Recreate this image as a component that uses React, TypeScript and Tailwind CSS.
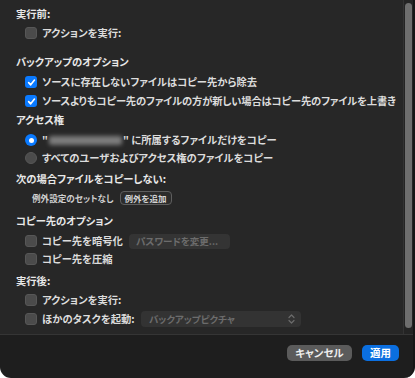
import React from 'react';

const font = { fontFamily: '"Noto Sans CJK JP", "Noto Sans", sans-serif' };

function Check({ checked = false }: { checked?: boolean }) {
  if (checked) {
    return (
      <div className="w-[12px] h-[12px] rounded-[3px] bg-[#0a7aff] flex items-center justify-center shrink-0">
        <svg width="9" height="9" viewBox="0 0 10 10" fill="none">
          <path d="M1.8 5.2 L4.1 7.6 L8.3 2.3" stroke="white" strokeWidth="1.8" strokeLinecap="round" strokeLinejoin="round" />
        </svg>
      </div>
    );
  }
  return <div className="w-[12px] h-[12px] rounded-[3px] bg-[#4b4b4b] border border-[#575757] shrink-0" />;
}

function Radio({ selected = false }: { selected?: boolean }) {
  if (selected) {
    return (
      <div className="w-[12px] h-[12px] rounded-full bg-[#0a7aff] flex items-center justify-center shrink-0">
        <div className="w-[5px] h-[5px] rounded-full bg-white" />
      </div>
    );
  }
  return <div className="w-[12px] h-[12px] rounded-full bg-[#4b4b4b] border border-[#575757] shrink-0" />;
}

function Heading({ children, className = '' }: { children: React.ReactNode; className?: string }) {
  return (
    <div className={`h-[18px] flex items-center pl-[16px] text-[10.3px] font-bold text-[#e8e8e8] ${className}`}>
      {children}
    </div>
  );
}

function Row({ children, className = '' }: { children: React.ReactNode; className?: string }) {
  return (
    <div className={`h-[18px] flex items-center pl-[25px] gap-[5px] text-[10.3px] font-bold text-[#dcdcdc] ${className}`}>
      {children}
    </div>
  );
}

export default function App() {
  return (
    <div className="w-[415px] h-[378px] bg-white" style={{ ...font, fontFeatureSettings: '"palt"' }}>
      <div className="w-full h-full bg-[#1e1e1e] rounded-b-[11px] overflow-hidden flex flex-col border-r-[2px] border-[#161616]">
        {/* scrolling content */}
        <div className="h-[335px] flex bg-[#272727] border-b border-[#353535]">
          <div className="flex-1 flex flex-col pt-[5px] whitespace-nowrap">
            <Heading>実行前:</Heading>
            <Row className="mt-[1px]">
              <Check />
              <span>アクションを実行:</span>
            </Row>

            <Heading className="mt-[11px]">バックアップのオプション</Heading>
            <Row className="mt-[2px]">
              <Check checked />
              <span>ソースに存在しないファイルはコピー先から除去</span>
            </Row>
            <Row className="mt-[1px]">
              <Check checked />
              <span className="tracking-[-0.16px]">ソースよりもコピー先のファイルの方が新しい場合はコピー先のファイルを上書き</span>
            </Row>

            <Heading className="mt-[1px]">アクセス権</Heading>
            <Row className="mt-[2px]">
              <Radio selected />
              <span className="flex items-center">
                "
                <span className="inline-block w-[73px] h-[9px] mx-[1px] rounded-[2px] bg-[#7c7c7c] blur-[2px]" />
                " に所属するファイルだけをコピー
              </span>
            </Row>
            <Row>
              <Radio />
              <span>すべてのユーザおよびアクセス権のファイルをコピー</span>
            </Row>

            <Heading className="mt-[3px]">次の場合ファイルをコピーしない:</Heading>
            <div className="h-[18px] mt-[1px] flex items-center pl-[32px] text-[8.6px] font-bold text-[#cfcfcf]">
              <span>例外設定のセットなし</span>
              <div className="ml-[6px] h-[14px] w-[52px] flex items-center justify-center rounded-[4px] border border-[#5e5e5e] bg-[#2c2c2c] text-[8.5px] text-[#d6d6d6]">
                例外を追加
              </div>
            </div>

            <Heading className="mt-[5px]">コピー先のオプション</Heading>
            <Row className="mt-[2px]">
              <Check />
              <span className="w-[82px]">コピー先を暗号化</span>
              <div className="h-[15px] w-[101px] px-[7px] flex items-center rounded-[4px] bg-[#343434] text-[9.5px] text-[#6c6c6c]">
                パスワードを変更...
              </div>
            </Row>
            <Row>
              <Check />
              <span>コピー先を圧縮</span>
            </Row>

            <Heading className="mt-[4px]">実行後:</Heading>
            <Row className="mt-[1px]">
              <Check />
              <span>アクションを実行:</span>
            </Row>
            <Row className="mt-[1px]">
              <Check />
              <span className="w-[94px]">ほかのタスクを起動:</span>
              <div className="h-[16px] w-[160px] pl-[8px] pr-[6px] flex items-center justify-between rounded-[4px] bg-[#333333] text-[9.5px] text-[#6c6c6c]">
                <span>バックアップピクチャ</span>
                <svg width="7" height="10" viewBox="0 0 7 10" fill="none">
                  <path d="M1 3.5 L3.5 1 L6 3.5 M1 6.5 L3.5 9 L6 6.5" stroke="#6c6c6c" strokeWidth="1.2" strokeLinecap="round" strokeLinejoin="round" />
                </svg>
              </div>
            </Row>
          </div>

          {/* scrollbar */}
          <div className="w-[10px] border-l border-[#333333] bg-[#242424] flex justify-center pt-[3px] pb-[6px]">
            <div className="w-[7px] h-full rounded-full bg-[#6e6e6e]" />
          </div>
        </div>

        {/* footer */}
        <div className="flex-1 flex items-start justify-end gap-[10px] pr-[14px] pt-[10px]">
          <button className="h-[16px] w-[65px] rounded-[5px] bg-[#5b5b5b] text-[10.5px] font-bold text-[#eeeeee] flex items-center justify-center">
            キャンセル
          </button>
          <button className="h-[16px] w-[37px] rounded-[5px] bg-[#0b6fe0] text-[10.5px] font-bold text-white flex items-center justify-center">
            適用
          </button>
        </div>
      </div>
    </div>
  );
}
